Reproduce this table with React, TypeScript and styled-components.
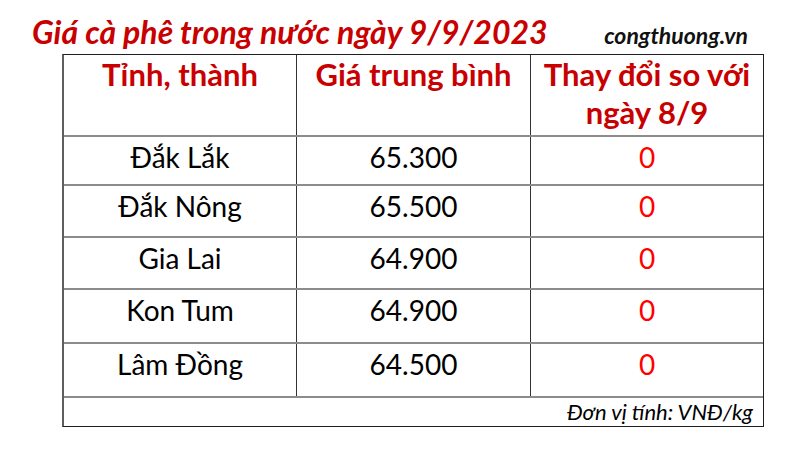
import React from "react";
import styled, { createGlobalStyle } from "styled-components";

const GlobalStyle = createGlobalStyle`
  html, body { margin: 0; padding: 0; background: #ffffff; }
  body { font-family: Lato, "Open Sans", sans-serif; }
`;

const Page = styled.div`
  width: 800px;
  height: 458px;
  background: #ffffff;
  overflow: hidden;
`;

const TitleBar = styled.div`
  box-sizing: border-box;
  height: 54px;
  padding: 14px 52px 0 32px;
  display: flex;
  justify-content: space-between;
  align-items: baseline;
`;

const Title = styled.h1`
  margin: 0;
  font-size: 32px;
  line-height: 36px;
  font-weight: 700;
  font-style: italic;
  color: #c80000;
  white-space: nowrap;
`;

const Site = styled.span`
  font-size: 23px;
  line-height: 36px;
  font-weight: 700;
  font-style: italic;
  color: #111111;
`;

const Table = styled.div`
  box-sizing: border-box;
  width: 702px;
  margin-left: 62px;
  border-top: 1px solid #1e1e1e;
  border-left: 2px solid #5e5e5e;
  border-right: 1px solid #1e1e1e;
  border-bottom: 1px solid #1e1e1e;
`;

const Row = styled.div<{ $h: number; $first?: boolean }>`
  box-sizing: border-box;
  height: ${(p) => p.$h}px;
  display: grid;
  grid-template-columns: 232px 234px 1fr;
  border-top: ${(p) => (p.$first ? "none" : "2px solid #8c8c8c")};
`;

const Cell = styled.div<{ $head?: boolean; $zero?: boolean }>`
  text-align: center;
  white-space: nowrap;
  font-size: ${(p) => (p.$head ? "31px" : "28px")};
  line-height: ${(p) => (p.$head ? "38px" : "34px")};
  padding-top: ${(p) => (p.$head ? "0px" : "3px")};
  font-weight: ${(p) => (p.$head ? 700 : 400)};
  color: ${(p) => (p.$head ? "#c80000" : p.$zero ? "#ff0000" : "#000000")};
  & + & {
    border-left: 1px solid #333333;
  }
`;

const Footer = styled.div`
  box-sizing: border-box;
  height: 30px;
  border-top: 2px solid #8c8c8c;
  padding: 2px 10px 0 0;
  text-align: right;
  font-size: 22px;
  line-height: 24px;
  font-style: italic;
  color: #000000;
`;

const rows = [
  { name: "Đắk Lắk", price: "65.300", change: "0", h: 49 },
  { name: "Đắk Nông", price: "65.500", change: "0", h: 52 },
  { name: "Gia Lai", price: "64.900", change: "0", h: 52 },
  { name: "Kon Tum", price: "64.900", change: "0", h: 54 },
  { name: "Lâm Đồng", price: "64.500", change: "0", h: 54 },
];

export default function App() {
  return (
    <Page>
      <GlobalStyle />
      <TitleBar>
        <Title>Giá cà phê trong nước ngày 9/9/2023</Title>
        <Site>congthuong.vn</Site>
      </TitleBar>
      <Table>
        <Row $h={80} $first>
          <Cell $head>Tỉnh, thành</Cell>
          <Cell $head>Giá trung bình</Cell>
          <Cell $head>
            Thay đổi so với
            <br />
            ngày 8/9
          </Cell>
        </Row>
        {rows.map((r) => (
          <Row key={r.name} $h={r.h}>
            <Cell>{r.name}</Cell>
            <Cell>{r.price}</Cell>
            <Cell $zero>{r.change}</Cell>
          </Row>
        ))}
        <Footer>Đơn vị tính: VNĐ/kg</Footer>
      </Table>
    </Page>
  );
}
